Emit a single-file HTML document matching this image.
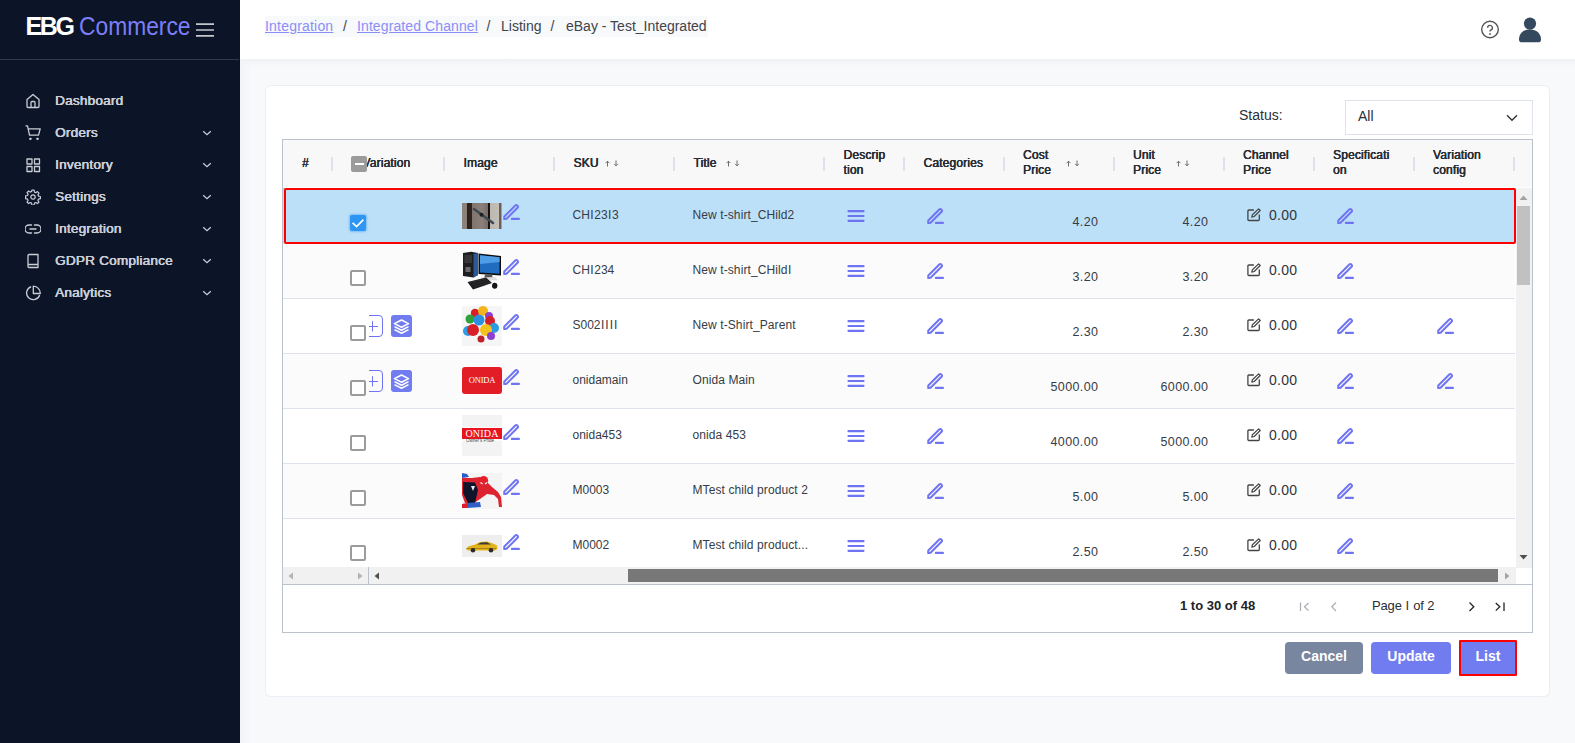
<!DOCTYPE html><html><head><meta charset="utf-8"><style>
*{box-sizing:border-box;margin:0;padding:0}
html,body{width:1575px;height:743px;overflow:hidden;background:#f8f9fb;font-family:"Liberation Sans",sans-serif;position:relative}
.a{position:absolute}
.t{line-height:1;white-space:nowrap}
</style></head><body>
<div class="a" style="left:0;top:0;width:240px;height:743px;background:#0c1427"></div>
<div class="a" style="left:0;top:59px;width:239px;height:1px;background:#2f3a4f"></div>
<div class="a t" style="left:25.5px;top:14.04px;font-size:25px;font-weight:bold;color:#ffffff;letter-spacing:-2.4px">EBG</div>
<div class="a t" style="left:78.5px;top:14.04px;font-size:25px;font-weight:normal;color:#7b7ff7;transform:scaleX(0.912);transform-origin:0 0">Commerce</div>
<svg class="a" style="left:196px;top:23px" width="18" height="14" viewBox="0 0 18 14"><path d="M0 1.2H18M0 7H18M0 12.8H18" stroke="#c3c6cd" stroke-width="1.7"/></svg>
<div class="a t" style="left:55px;top:93.57px;font-size:13.5px;font-weight:normal;color:#c9cdd6;text-shadow:0.45px 0 0 #c9cdd6,-0.1px 0 0 #c9cdd6;letter-spacing:0.25px">Dashboard</div>
<svg class="a" style="left:25px;top:93px" width="16" height="16" viewBox="0 0 16 16"><path d="M2 6.5L8 1.5 14 6.5V13.5A1 1 0 0 1 13 14.5H3A1 1 0 0 1 2 13.5Z M6 14.5V9.5A1 1 0 0 1 7 8.5H9A1 1 0 0 1 10 9.5V14.5" fill="none" stroke="#c9cdd6" stroke-width="1.3" stroke-linejoin="round"/></svg>
<div class="a t" style="left:55px;top:125.57px;font-size:13.5px;font-weight:normal;color:#c9cdd6;text-shadow:0.45px 0 0 #c9cdd6,-0.1px 0 0 #c9cdd6;letter-spacing:0.25px">Orders</div>
<svg class="a" style="left:25px;top:125px" width="16" height="16" viewBox="0 0 16 16"><path d="M0.5 0.8H2.5L4.5 10.2H13.5L15.2 3.8H3.3" fill="none" stroke="#c9cdd6" stroke-width="1.3" stroke-linejoin="round"/><rect x="4.3" y="12.7" width="2.2" height="2.2" rx="0.6" fill="#c9cdd6"/><rect x="11.4" y="12.7" width="2.2" height="2.2" rx="0.6" fill="#c9cdd6"/></svg>
<svg class="a" style="left:202px;top:130px" width="10" height="6" viewBox="0 0 10 6"><path d="M1.2 1.2L5 4.7 8.8 1.2" fill="none" stroke="#c9cdd6" stroke-width="1.3"/></svg>
<div class="a t" style="left:55px;top:157.57px;font-size:13.5px;font-weight:normal;color:#c9cdd6;text-shadow:0.45px 0 0 #c9cdd6,-0.1px 0 0 #c9cdd6;letter-spacing:0.25px">Inventory</div>
<svg class="a" style="left:25px;top:157px" width="16" height="16" viewBox="0 0 16 16"><path d="M2 2H7V7H2Z M9.5 2H14.5V7H9.5Z M2 9.5H7V14.5H2Z M9.5 9.5H14.5V14.5H9.5Z" fill="none" stroke="#c9cdd6" stroke-width="1.3" stroke-linejoin="round"/></svg>
<svg class="a" style="left:202px;top:162px" width="10" height="6" viewBox="0 0 10 6"><path d="M1.2 1.2L5 4.7 8.8 1.2" fill="none" stroke="#c9cdd6" stroke-width="1.3"/></svg>
<div class="a t" style="left:55px;top:189.57px;font-size:13.5px;font-weight:normal;color:#c9cdd6;text-shadow:0.45px 0 0 #c9cdd6,-0.1px 0 0 #c9cdd6;letter-spacing:0.25px">Settings</div>
<svg class="a" style="left:25px;top:189px" width="16" height="16" viewBox="0 0 16 16"><path d="M6.9 1.2h2.2l.4 1.9 1.3.6 1.6-1.1 1.6 1.6-1.1 1.6.6 1.3 1.9.4v2.2l-1.9.4-.6 1.3 1.1 1.6-1.6 1.6-1.6-1.1-1.3.6-.4 1.9H6.9l-.4-1.9-1.3-.6-1.6 1.1-1.6-1.6 1.1-1.6-.6-1.3-1.9-.4V6.9l1.9-.4.6-1.3-1.1-1.6 1.6-1.6 1.6 1.1 1.3-.6Z" fill="none" stroke="#c9cdd6" stroke-width="1.2" stroke-linejoin="round"/><circle cx="8" cy="8" r="2.2" fill="none" stroke="#c9cdd6" stroke-width="1.2"/></svg>
<svg class="a" style="left:202px;top:194px" width="10" height="6" viewBox="0 0 10 6"><path d="M1.2 1.2L5 4.7 8.8 1.2" fill="none" stroke="#c9cdd6" stroke-width="1.3"/></svg>
<div class="a t" style="left:55px;top:221.57px;font-size:13.5px;font-weight:normal;color:#c9cdd6;text-shadow:0.45px 0 0 #c9cdd6,-0.1px 0 0 #c9cdd6;letter-spacing:0.25px">Integration</div>
<svg class="a" style="left:25px;top:221px" width="16" height="16" viewBox="0 0 16 16"><path d="M6.5 4H4A4 4 0 0 0 4 12H6.5 M9.5 4H12A4 4 0 0 1 12 12H9.5 M5 8H11" fill="none" stroke="#c9cdd6" stroke-width="1.4" stroke-linecap="round"/></svg>
<svg class="a" style="left:202px;top:226px" width="10" height="6" viewBox="0 0 10 6"><path d="M1.2 1.2L5 4.7 8.8 1.2" fill="none" stroke="#c9cdd6" stroke-width="1.3"/></svg>
<div class="a t" style="left:55px;top:253.57px;font-size:13.5px;font-weight:normal;color:#c9cdd6;text-shadow:0.45px 0 0 #c9cdd6,-0.1px 0 0 #c9cdd6;letter-spacing:0.25px">GDPR Compliance</div>
<svg class="a" style="left:25px;top:253px" width="16" height="16" viewBox="0 0 16 16"><path d="M3 2.5A1 1 0 0 1 4 1.5H13V14.5H4A1 1 0 0 1 3 13.5Z M3 11.5H13" fill="none" stroke="#c9cdd6" stroke-width="1.3" stroke-linejoin="round"/></svg>
<svg class="a" style="left:202px;top:258px" width="10" height="6" viewBox="0 0 10 6"><path d="M1.2 1.2L5 4.7 8.8 1.2" fill="none" stroke="#c9cdd6" stroke-width="1.3"/></svg>
<div class="a t" style="left:55px;top:285.57px;font-size:13.5px;font-weight:normal;color:#c9cdd6;text-shadow:0.45px 0 0 #c9cdd6,-0.1px 0 0 #c9cdd6;letter-spacing:0.25px">Analytics</div>
<svg class="a" style="left:25px;top:285px" width="16" height="16" viewBox="0 0 16 16"><path d="M6.2 1.6A6.7 6.7 0 1 0 14.7 10" fill="none" stroke="#c9cdd6" stroke-width="1.3"/><path d="M8.3 1.1V8.5H15.3A7.2 7.2 0 0 0 8.3 1.1Z" fill="none" stroke="#c9cdd6" stroke-width="1.3" stroke-linejoin="round"/></svg>
<svg class="a" style="left:202px;top:290px" width="10" height="6" viewBox="0 0 10 6"><path d="M1.2 1.2L5 4.7 8.8 1.2" fill="none" stroke="#c9cdd6" stroke-width="1.3"/></svg>
<div class="a" style="left:240px;top:0;width:1335px;height:59px;background:#fff"></div>
<div class="a" style="left:240px;top:59px;width:1335px;height:7px;background:linear-gradient(#eef0f3,rgba(248,249,251,0))"></div>
<div class="a" style="left:240px;top:59px;width:12px;height:684px;background:linear-gradient(90deg,#f2f3f6,rgba(248,249,251,0))"></div>
<div class="a" style="left:265px;top:16px;width:443px;height:21px;background:#f8f9fb"></div>
<div class="a t" style="left:265px;top:18.55px;font-size:14px;font-weight:normal;color:#8a8ef8;letter-spacing:0.2px"><u>Integration</u></div>
<div class="a t" style="left:343px;top:18.55px;font-size:14px;font-weight:normal;color:#3f434a;">/</div>
<div class="a t" style="left:357px;top:18.55px;font-size:14px;font-weight:normal;color:#8a8ef8;letter-spacing:0.1px"><u>Integrated Channel</u></div>
<div class="a t" style="left:486.5px;top:18.55px;font-size:14px;font-weight:normal;color:#3f434a;">/</div>
<div class="a t" style="left:501px;top:18.55px;font-size:14px;font-weight:normal;color:#3f434a;">Listing</div>
<div class="a t" style="left:550.5px;top:18.55px;font-size:14px;font-weight:normal;color:#3f434a;">/</div>
<div class="a t" style="left:566px;top:18.55px;font-size:14px;font-weight:normal;color:#3f434a;">eBay - Test_Integrated</div>
<svg class="a" style="left:1480px;top:20px" width="20" height="20" viewBox="0 0 20 20"><circle cx="10" cy="9.5" r="8.3" fill="none" stroke="#555" stroke-width="1.4"/><path d="M7.6 7.8A2.4 2.4 0 1 1 10.6 10.1C10 10.4 10 10.9 10 11.5" fill="none" stroke="#555" stroke-width="1.4"/><circle cx="10" cy="14" r="0.9" fill="#555"/></svg>
<svg class="a" style="left:1518px;top:16px" width="24" height="28" viewBox="0 0 24 28"><circle cx="12" cy="7.6" r="6.1" fill="#34495e"/><path d="M1 23.5C1 17.5 5.5 13.5 12 13.5S23 17.5 23 23.5C23 25.5 22 26.3 20 26.3H4C2 26.3 1 25.5 1 23.5Z" fill="#34495e"/></svg>
<div class="a" style="left:266px;top:86px;width:1283px;height:610px;background:#fff;border-radius:5px;box-shadow:0 0 0 1px #eceef5"></div>
<div class="a t" style="left:1239px;top:107.55px;font-size:14px;font-weight:normal;color:#2b2f36;">Status:</div>
<div class="a" style="left:1345px;top:100px;width:188px;height:35px;border:1px solid #dfe3ea;background:#fff"></div>
<div class="a t" style="left:1358px;top:109.15px;font-size:14px;font-weight:normal;color:#2b2f36;">All</div>
<svg class="a" style="left:1506px;top:114px" width="12" height="8" viewBox="0 0 12 8"><path d="M1 1.2L6 6.2 11 1.2" fill="none" stroke="#333" stroke-width="1.4"/></svg>
<div class="a" style="left:282px;top:139px;width:1251px;height:494px;border:1px solid #bcc2cb;background:#fff"></div>
<div class="a" style="left:283px;top:140px;width:1249px;height:47px;background:#f8f8f8"></div>
<div class="a" style="left:283px;top:187px;width:1249px;height:1px;background:#fcfdfd"></div>
<div class="a" style="left:283px;top:188px;width:1249px;height:1px;background:#bcc2cb"></div>
<div class="a" style="left:331px;top:157px;width:2px;height:14px;background:#dfe2ec"></div>
<div class="a" style="left:443px;top:157px;width:2px;height:14px;background:#dfe2ec"></div>
<div class="a" style="left:553px;top:157px;width:2px;height:14px;background:#dfe2ec"></div>
<div class="a" style="left:673px;top:157px;width:2px;height:14px;background:#dfe2ec"></div>
<div class="a" style="left:823px;top:157px;width:2px;height:14px;background:#dfe2ec"></div>
<div class="a" style="left:903px;top:157px;width:2px;height:14px;background:#dfe2ec"></div>
<div class="a" style="left:1003px;top:157px;width:2px;height:14px;background:#dfe2ec"></div>
<div class="a" style="left:1113px;top:157px;width:2px;height:14px;background:#dfe2ec"></div>
<div class="a" style="left:1223px;top:157px;width:2px;height:14px;background:#dfe2ec"></div>
<div class="a" style="left:1313px;top:157px;width:2px;height:14px;background:#dfe2ec"></div>
<div class="a" style="left:1413px;top:157px;width:2px;height:14px;background:#dfe2ec"></div>
<div class="a" style="left:1513px;top:157px;width:2px;height:14px;background:#dfe2ec"></div>
<div class="a t" style="left:302px;top:156.94px;font-size:12px;font-weight:normal;color:#2a2e35;text-shadow:0.35px 0 0 #2a2e35,-0.1px 0 0 #2a2e35;letter-spacing:0.15px">#</div>
<div class="a t" style="left:362.5px;top:156.94px;font-size:12px;font-weight:normal;color:#2a2e35;text-shadow:0.35px 0 0 #2a2e35,-0.1px 0 0 #2a2e35;letter-spacing:0.15px">Variation</div>
<div class="a" style="left:351px;top:156px;width:16px;height:16px;background:#9b9b9b;border-radius:2px"></div>
<div class="a" style="left:354.5px;top:163px;width:9px;height:1.6px;background:#fff"></div>
<div class="a t" style="left:463.5px;top:156.94px;font-size:12px;font-weight:normal;color:#2a2e35;text-shadow:0.35px 0 0 #2a2e35,-0.1px 0 0 #2a2e35;letter-spacing:0.15px">Image</div>
<div class="a t" style="left:573.5px;top:156.94px;font-size:12px;font-weight:normal;color:#2a2e35;text-shadow:0.35px 0 0 #2a2e35,-0.1px 0 0 #2a2e35;letter-spacing:0.15px">SKU</div>
<div class="a t" style="left:693.5px;top:156.94px;font-size:12px;font-weight:normal;color:#2a2e35;text-shadow:0.35px 0 0 #2a2e35,-0.1px 0 0 #2a2e35;letter-spacing:0.15px">Title</div>
<div class="a t" style="left:843.5px;top:148.64px;font-size:12px;font-weight:normal;color:#2a2e35;text-shadow:0.35px 0 0 #2a2e35,-0.1px 0 0 #2a2e35;letter-spacing:0.15px">Descrip</div>
<div class="a t" style="left:843.5px;top:164.24px;font-size:12px;font-weight:normal;color:#2a2e35;text-shadow:0.35px 0 0 #2a2e35,-0.1px 0 0 #2a2e35;letter-spacing:0.15px">tion</div>
<div class="a t" style="left:923.5px;top:156.94px;font-size:12px;font-weight:normal;color:#2a2e35;text-shadow:0.35px 0 0 #2a2e35,-0.1px 0 0 #2a2e35;letter-spacing:0.15px">Categories</div>
<div class="a t" style="left:1023px;top:148.64px;font-size:12px;font-weight:normal;color:#2a2e35;text-shadow:0.35px 0 0 #2a2e35,-0.1px 0 0 #2a2e35;letter-spacing:0.15px">Cost</div>
<div class="a t" style="left:1023px;top:164.24px;font-size:12px;font-weight:normal;color:#2a2e35;text-shadow:0.35px 0 0 #2a2e35,-0.1px 0 0 #2a2e35;letter-spacing:0.15px">Price</div>
<div class="a t" style="left:1133px;top:148.64px;font-size:12px;font-weight:normal;color:#2a2e35;text-shadow:0.35px 0 0 #2a2e35,-0.1px 0 0 #2a2e35;letter-spacing:0.15px">Unit</div>
<div class="a t" style="left:1133px;top:164.24px;font-size:12px;font-weight:normal;color:#2a2e35;text-shadow:0.35px 0 0 #2a2e35,-0.1px 0 0 #2a2e35;letter-spacing:0.15px">Price</div>
<div class="a t" style="left:1243px;top:148.64px;font-size:12px;font-weight:normal;color:#2a2e35;text-shadow:0.35px 0 0 #2a2e35,-0.1px 0 0 #2a2e35;letter-spacing:0.15px">Channel</div>
<div class="a t" style="left:1243px;top:164.24px;font-size:12px;font-weight:normal;color:#2a2e35;text-shadow:0.35px 0 0 #2a2e35,-0.1px 0 0 #2a2e35;letter-spacing:0.15px">Price</div>
<div class="a t" style="left:1333px;top:148.64px;font-size:12px;font-weight:normal;color:#2a2e35;text-shadow:0.35px 0 0 #2a2e35,-0.1px 0 0 #2a2e35;letter-spacing:0.15px">Specificati</div>
<div class="a t" style="left:1333px;top:164.24px;font-size:12px;font-weight:normal;color:#2a2e35;text-shadow:0.35px 0 0 #2a2e35,-0.1px 0 0 #2a2e35;letter-spacing:0.15px">on</div>
<div class="a t" style="left:1433px;top:148.64px;font-size:12px;font-weight:normal;color:#2a2e35;text-shadow:0.35px 0 0 #2a2e35,-0.1px 0 0 #2a2e35;letter-spacing:0.15px">Variation</div>
<div class="a t" style="left:1433px;top:164.24px;font-size:12px;font-weight:normal;color:#2a2e35;text-shadow:0.35px 0 0 #2a2e35,-0.1px 0 0 #2a2e35;letter-spacing:0.15px">config</div>
<svg class="a" style="left:604px;top:160px" width="16" height="7" viewBox="0 0 16 7"><path d="M3.5 6.5V1.2M1.6 3.1L3.5 1.2 5.4 3.1 M12 0.5V5.8M10.1 3.9L12 5.8 13.9 3.9" fill="none" stroke="#606060" stroke-width="0.9"/></svg>
<svg class="a" style="left:725px;top:160px" width="16" height="7" viewBox="0 0 16 7"><path d="M3.5 6.5V1.2M1.6 3.1L3.5 1.2 5.4 3.1 M12 0.5V5.8M10.1 3.9L12 5.8 13.9 3.9" fill="none" stroke="#606060" stroke-width="0.9"/></svg>
<svg class="a" style="left:1064.5px;top:160px" width="16" height="7" viewBox="0 0 16 7"><path d="M3.5 6.5V1.2M1.6 3.1L3.5 1.2 5.4 3.1 M12 0.5V5.8M10.1 3.9L12 5.8 13.9 3.9" fill="none" stroke="#606060" stroke-width="0.9"/></svg>
<svg class="a" style="left:1174.5px;top:160px" width="16" height="7" viewBox="0 0 16 7"><path d="M3.5 6.5V1.2M1.6 3.1L3.5 1.2 5.4 3.1 M12 0.5V5.8M10.1 3.9L12 5.8 13.9 3.9" fill="none" stroke="#606060" stroke-width="0.9"/></svg>
<div class="a" style="left:283px;top:189px;width:1232px;height:54px;background:#bde0f9"></div>
<div class="a" style="left:350px;top:215px;width:16px;height:16px;border-radius:2px;background:#2d95f2;box-shadow:0 0 2px 1px rgba(45,149,242,.45)"></div><svg class="a" style="left:350px;top:215px" width="16" height="16" viewBox="0 0 16 16"><path d="M2.6 7.8L6.6 11.6 13.4 4.6" fill="none" stroke="#fff" stroke-width="1.7"/></svg>
<div class="a" style="left:462px;top:203px;width:40px;height:26px;background:linear-gradient(90deg,#8f837d 0,#8a7f79 12%,#2b201b 13%,#30241e 24%,#7f746e 25%,#8a8079 50%,#7a6e66 64%,#151010 65%,#1a1412 70%,#bdb7b2 71%,#c4beb9 92%,#6b5f58 93%,#6b5f58 97%,#a49c96 98%)"></div><svg class="a" style="left:462px;top:203px" width="40" height="26"><path d="M12 6L31 20" stroke="#3d4b52" stroke-width="2.6" stroke-linecap="round"/><circle cx="19.5" cy="11.8" r="2" fill="#1b2226"/></svg>
<svg class="a" style="left:503px;top:203.8px" width="17" height="16" viewBox="0 0 17 16"><path d="M1.27 12.57 L12.27 1.57 A1.6 1.6 0 0 1 14.53 3.83 L3.53 14.83 L1.2 15.1 Z" fill="none" stroke="#6f74f2" stroke-width="2" stroke-linejoin="round"/><path d="M8.9 14.9 H15.9" stroke="#6f74f2" stroke-width="2.2" stroke-linecap="round"/></svg>
<div class="a t" style="left:572.5px;top:208.84px;font-size:12px;font-weight:normal;color:#363c46;">CH<span style="letter-spacing:0.7px;padding-left:0.35px">I</span>23<span style="letter-spacing:0.7px;padding-left:0.35px">I</span>3</div>
<div class="a t" style="left:692.5px;top:208.84px;font-size:12px;font-weight:normal;color:#363c46;letter-spacing:0.1px">New t-shirt_CHild2</div>
<svg class="a" style="left:846.5px;top:210px" width="18" height="12" viewBox="0 0 18 12"><path d="M1.5 1.2H16.5M1.5 6H16.5M1.5 10.8H16.5" stroke="#6f74f2" stroke-width="2.2" stroke-linecap="round"/></svg>
<svg class="a" style="left:927px;top:207.5px" width="17" height="16" viewBox="0 0 17 16"><path d="M1.27 12.57 L12.27 1.57 A1.6 1.6 0 0 1 14.53 3.83 L3.53 14.83 L1.2 15.1 Z" fill="none" stroke="#6f74f2" stroke-width="2" stroke-linejoin="round"/><path d="M8.9 14.9 H15.9" stroke="#6f74f2" stroke-width="2.2" stroke-linecap="round"/></svg>
<div class="a t" style="right:476.5999999999999px;top:216.42px;font-size:12.5px;font-weight:normal;color:#363c46;letter-spacing:0.4px">4.20</div>
<div class="a t" style="right:366.5999999999999px;top:216.42px;font-size:12.5px;font-weight:normal;color:#363c46;letter-spacing:0.4px">4.20</div>
<svg class="a" style="left:1247px;top:207.5px" width="14" height="14" viewBox="0 0 14 14"><path d="M6.9 2H1.9A1 1 0 0 0 0.9 3V11.5A1 1 0 0 0 1.9 12.5H11.3A1 1 0 0 0 12.3 11.5V6.5" fill="none" stroke="#444" stroke-width="1.3"/><path d="M11.6 0.9L13.2 2.5 7.2 8.5 4.8 9.1 5.4 6.7Z" fill="none" stroke="#444" stroke-width="1.2" stroke-linejoin="round"/></svg>
<div class="a t" style="left:1269px;top:208.15px;font-size:14px;font-weight:normal;color:#2f343b;letter-spacing:0.3px">0.00</div>
<svg class="a" style="left:1337px;top:207.5px" width="17" height="16" viewBox="0 0 17 16"><path d="M1.27 12.57 L12.27 1.57 A1.6 1.6 0 0 1 14.53 3.83 L3.53 14.83 L1.2 15.1 Z" fill="none" stroke="#6f74f2" stroke-width="2" stroke-linejoin="round"/><path d="M8.9 14.9 H15.9" stroke="#6f74f2" stroke-width="2.2" stroke-linecap="round"/></svg>
<div class="a" style="left:283px;top:243px;width:1232px;height:55px;background:#fbfbfb"></div>
<div class="a" style="left:283px;top:243px;width:1232px;height:1px;background:#dde2eb"></div>
<div class="a" style="left:350px;top:270px;width:16px;height:16px;border:2px solid #9b9b9b;border-radius:2px;background:#fff"></div>
<svg class="a" style="left:462px;top:251px" width="40" height="40" viewBox="0 0 40 40"><path d="M1 2L9 0.8 16 2V24L11.5 26.5 1 25Z" fill="#1e1e20"/><path d="M11.5 3L16 2V24L11.5 26.5Z" fill="#2a5a9a"/><path d="M2.5 5H10M2.5 7H10M2.5 9H10M2.5 11H10" stroke="#5a5a5e" stroke-width="0.8"/><rect x="3.5" y="16" width="5" height="5" fill="#6a6a6e"/><path d="M16.5 2.5L39 5V24.5L16.5 23Z" fill="#0e0e10"/><path d="M18 4.2L37.5 6.3V22.8L18 21.5Z" fill="#1f6cc0"/><path d="M18 4.2L37.5 6.3V11L18 13Z" fill="#4f9de6"/><path d="M23 23.5H30L31 28H22Z" fill="#555"/><path d="M19 26.5L33 26 36 29 22 30Z" fill="#dddddd"/><path d="M5.5 31L24 26.5 30 32 11 38.5Z" fill="#1c1c1e"/><path d="M8 31.5L24 27.8M10 33.5L26 29.5M12 35.5L28 31.3" stroke="#3d3d40" stroke-width="0.6"/><ellipse cx="32.7" cy="34.7" rx="2.7" ry="3" fill="#151515"/></svg>
<svg class="a" style="left:503px;top:258.8px" width="17" height="16" viewBox="0 0 17 16"><path d="M1.27 12.57 L12.27 1.57 A1.6 1.6 0 0 1 14.53 3.83 L3.53 14.83 L1.2 15.1 Z" fill="none" stroke="#6f74f2" stroke-width="2" stroke-linejoin="round"/><path d="M8.9 14.9 H15.9" stroke="#6f74f2" stroke-width="2.2" stroke-linecap="round"/></svg>
<div class="a t" style="left:572.5px;top:263.84px;font-size:12px;font-weight:normal;color:#363c46;">CH<span style="letter-spacing:0.7px;padding-left:0.35px">I</span>234</div>
<div class="a t" style="left:692.5px;top:263.84px;font-size:12px;font-weight:normal;color:#363c46;letter-spacing:0.1px">New t-shirt_CHild<span style="letter-spacing:0.7px;padding-left:0.35px">I</span></div>
<svg class="a" style="left:846.5px;top:265px" width="18" height="12" viewBox="0 0 18 12"><path d="M1.5 1.2H16.5M1.5 6H16.5M1.5 10.8H16.5" stroke="#6f74f2" stroke-width="2.2" stroke-linecap="round"/></svg>
<svg class="a" style="left:927px;top:262.5px" width="17" height="16" viewBox="0 0 17 16"><path d="M1.27 12.57 L12.27 1.57 A1.6 1.6 0 0 1 14.53 3.83 L3.53 14.83 L1.2 15.1 Z" fill="none" stroke="#6f74f2" stroke-width="2" stroke-linejoin="round"/><path d="M8.9 14.9 H15.9" stroke="#6f74f2" stroke-width="2.2" stroke-linecap="round"/></svg>
<div class="a t" style="right:476.5999999999999px;top:271.42px;font-size:12.5px;font-weight:normal;color:#363c46;letter-spacing:0.4px">3.20</div>
<div class="a t" style="right:366.5999999999999px;top:271.42px;font-size:12.5px;font-weight:normal;color:#363c46;letter-spacing:0.4px">3.20</div>
<svg class="a" style="left:1247px;top:262.5px" width="14" height="14" viewBox="0 0 14 14"><path d="M6.9 2H1.9A1 1 0 0 0 0.9 3V11.5A1 1 0 0 0 1.9 12.5H11.3A1 1 0 0 0 12.3 11.5V6.5" fill="none" stroke="#444" stroke-width="1.3"/><path d="M11.6 0.9L13.2 2.5 7.2 8.5 4.8 9.1 5.4 6.7Z" fill="none" stroke="#444" stroke-width="1.2" stroke-linejoin="round"/></svg>
<div class="a t" style="left:1269px;top:263.15px;font-size:14px;font-weight:normal;color:#2f343b;letter-spacing:0.3px">0.00</div>
<svg class="a" style="left:1337px;top:262.5px" width="17" height="16" viewBox="0 0 17 16"><path d="M1.27 12.57 L12.27 1.57 A1.6 1.6 0 0 1 14.53 3.83 L3.53 14.83 L1.2 15.1 Z" fill="none" stroke="#6f74f2" stroke-width="2" stroke-linejoin="round"/><path d="M8.9 14.9 H15.9" stroke="#6f74f2" stroke-width="2.2" stroke-linecap="round"/></svg>
<div class="a" style="left:283px;top:298px;width:1232px;height:55px;background:#ffffff"></div>
<div class="a" style="left:283px;top:298px;width:1232px;height:1px;background:#dde2eb"></div>
<div class="a" style="left:350px;top:325px;width:16px;height:16px;border:2px solid #9b9b9b;border-radius:2px;background:#fff"></div>
<svg class="a" style="left:369px;top:315px" width="15" height="23" viewBox="0 0 15 23"><path d="M0 0.5H10A3.5 3.5 0 0 1 13.5 4V18A3.5 3.5 0 0 1 10 21.5H0" fill="none" stroke="#6f74f2" stroke-width="1"/><path d="M0 11.5H9M3.5 6.2V16.5" stroke="#6f74f2" stroke-width="1"/></svg>
<div class="a" style="left:391px;top:315px;width:21px;height:22px;background:#717cf0;border-radius:3px"></div>
<svg class="a" style="left:391px;top:315px" width="21" height="22" viewBox="0 0 21 22"><path d="M10.5 5L17.5 8.6 10.5 12.2 3.5 8.6Z" fill="none" stroke="#fff" stroke-width="1.6" stroke-linejoin="round"/><path d="M3.5 11.6L10.5 15.2 17.5 11.6M3.5 14.6L10.5 18.2 17.5 14.6" fill="none" stroke="#fff" stroke-width="1.6" stroke-linejoin="round"/></svg>
<div class="a" style="left:462px;top:306px;width:40px;height:40px;background:#f5f5f5"></div><svg class="a" style="left:462px;top:306px" width="40" height="40" viewBox="0 0 40 40"><circle cx="13" cy="7" r="4.2" fill="#d81f26"/><circle cx="21" cy="5" r="5" fill="#f2b51d"/><circle cx="27" cy="10" r="4" fill="#8e3fcf"/><circle cx="8" cy="13" r="4.5" fill="#2fa13a"/><circle cx="17" cy="14" r="5.5" fill="#2c8fe0"/><circle cx="28" cy="15" r="5" fill="#d62028"/><circle cx="32" cy="22" r="5" fill="#2c9be0"/><circle cx="6" cy="25" r="5" fill="#2c9be0"/><circle cx="11" cy="24" r="6" fill="#d81f26"/><circle cx="24" cy="24" r="6" fill="#f5c21b"/><circle cx="19" cy="33" r="3.5" fill="#c0202a"/><circle cx="29" cy="30" r="4" fill="#8e3fcf"/></svg>
<svg class="a" style="left:503px;top:313.8px" width="17" height="16" viewBox="0 0 17 16"><path d="M1.27 12.57 L12.27 1.57 A1.6 1.6 0 0 1 14.53 3.83 L3.53 14.83 L1.2 15.1 Z" fill="none" stroke="#6f74f2" stroke-width="2" stroke-linejoin="round"/><path d="M8.9 14.9 H15.9" stroke="#6f74f2" stroke-width="2.2" stroke-linecap="round"/></svg>
<div class="a t" style="left:572.5px;top:318.84px;font-size:12px;font-weight:normal;color:#363c46;">S002<span style="letter-spacing:0.7px;padding-left:0.35px">I</span><span style="letter-spacing:0.7px;padding-left:0.35px">I</span><span style="letter-spacing:0.7px;padding-left:0.35px">I</span><span style="letter-spacing:0.7px;padding-left:0.35px">I</span></div>
<div class="a t" style="left:692.5px;top:318.84px;font-size:12px;font-weight:normal;color:#363c46;letter-spacing:0.1px">New t-Shirt_Parent</div>
<svg class="a" style="left:846.5px;top:320px" width="18" height="12" viewBox="0 0 18 12"><path d="M1.5 1.2H16.5M1.5 6H16.5M1.5 10.8H16.5" stroke="#6f74f2" stroke-width="2.2" stroke-linecap="round"/></svg>
<svg class="a" style="left:927px;top:317.5px" width="17" height="16" viewBox="0 0 17 16"><path d="M1.27 12.57 L12.27 1.57 A1.6 1.6 0 0 1 14.53 3.83 L3.53 14.83 L1.2 15.1 Z" fill="none" stroke="#6f74f2" stroke-width="2" stroke-linejoin="round"/><path d="M8.9 14.9 H15.9" stroke="#6f74f2" stroke-width="2.2" stroke-linecap="round"/></svg>
<div class="a t" style="right:476.5999999999999px;top:326.42px;font-size:12.5px;font-weight:normal;color:#363c46;letter-spacing:0.4px">2.30</div>
<div class="a t" style="right:366.5999999999999px;top:326.42px;font-size:12.5px;font-weight:normal;color:#363c46;letter-spacing:0.4px">2.30</div>
<svg class="a" style="left:1247px;top:317.5px" width="14" height="14" viewBox="0 0 14 14"><path d="M6.9 2H1.9A1 1 0 0 0 0.9 3V11.5A1 1 0 0 0 1.9 12.5H11.3A1 1 0 0 0 12.3 11.5V6.5" fill="none" stroke="#444" stroke-width="1.3"/><path d="M11.6 0.9L13.2 2.5 7.2 8.5 4.8 9.1 5.4 6.7Z" fill="none" stroke="#444" stroke-width="1.2" stroke-linejoin="round"/></svg>
<div class="a t" style="left:1269px;top:318.15px;font-size:14px;font-weight:normal;color:#2f343b;letter-spacing:0.3px">0.00</div>
<svg class="a" style="left:1337px;top:317.5px" width="17" height="16" viewBox="0 0 17 16"><path d="M1.27 12.57 L12.27 1.57 A1.6 1.6 0 0 1 14.53 3.83 L3.53 14.83 L1.2 15.1 Z" fill="none" stroke="#6f74f2" stroke-width="2" stroke-linejoin="round"/><path d="M8.9 14.9 H15.9" stroke="#6f74f2" stroke-width="2.2" stroke-linecap="round"/></svg>
<svg class="a" style="left:1437px;top:317.5px" width="17" height="16" viewBox="0 0 17 16"><path d="M1.27 12.57 L12.27 1.57 A1.6 1.6 0 0 1 14.53 3.83 L3.53 14.83 L1.2 15.1 Z" fill="none" stroke="#6f74f2" stroke-width="2" stroke-linejoin="round"/><path d="M8.9 14.9 H15.9" stroke="#6f74f2" stroke-width="2.2" stroke-linecap="round"/></svg>
<div class="a" style="left:283px;top:353px;width:1232px;height:55px;background:#fbfbfb"></div>
<div class="a" style="left:283px;top:353px;width:1232px;height:1px;background:#dde2eb"></div>
<div class="a" style="left:350px;top:380px;width:16px;height:16px;border:2px solid #9b9b9b;border-radius:2px;background:#fff"></div>
<svg class="a" style="left:369px;top:370px" width="15" height="23" viewBox="0 0 15 23"><path d="M0 0.5H10A3.5 3.5 0 0 1 13.5 4V18A3.5 3.5 0 0 1 10 21.5H0" fill="none" stroke="#6f74f2" stroke-width="1"/><path d="M0 11.5H9M3.5 6.2V16.5" stroke="#6f74f2" stroke-width="1"/></svg>
<div class="a" style="left:391px;top:370px;width:21px;height:22px;background:#717cf0;border-radius:3px"></div>
<svg class="a" style="left:391px;top:370px" width="21" height="22" viewBox="0 0 21 22"><path d="M10.5 5L17.5 8.6 10.5 12.2 3.5 8.6Z" fill="none" stroke="#fff" stroke-width="1.6" stroke-linejoin="round"/><path d="M3.5 11.6L10.5 15.2 17.5 11.6M3.5 14.6L10.5 18.2 17.5 14.6" fill="none" stroke="#fff" stroke-width="1.6" stroke-linejoin="round"/></svg>
<div class="a" style="left:462px;top:367px;width:40px;height:27px;background:#e31d25;border-radius:3px"></div><div class="a t" style="left:462px;top:376px;width:40px;text-align:center;font-family:'Liberation Serif',serif;font-size:8.5px;color:#fff;letter-spacing:-0.2px">ONIDA</div>
<svg class="a" style="left:503px;top:368.8px" width="17" height="16" viewBox="0 0 17 16"><path d="M1.27 12.57 L12.27 1.57 A1.6 1.6 0 0 1 14.53 3.83 L3.53 14.83 L1.2 15.1 Z" fill="none" stroke="#6f74f2" stroke-width="2" stroke-linejoin="round"/><path d="M8.9 14.9 H15.9" stroke="#6f74f2" stroke-width="2.2" stroke-linecap="round"/></svg>
<div class="a t" style="left:572.5px;top:373.84px;font-size:12px;font-weight:normal;color:#363c46;">onidamain</div>
<div class="a t" style="left:692.5px;top:373.84px;font-size:12px;font-weight:normal;color:#363c46;letter-spacing:0.1px">Onida Main</div>
<svg class="a" style="left:846.5px;top:375px" width="18" height="12" viewBox="0 0 18 12"><path d="M1.5 1.2H16.5M1.5 6H16.5M1.5 10.8H16.5" stroke="#6f74f2" stroke-width="2.2" stroke-linecap="round"/></svg>
<svg class="a" style="left:927px;top:372.5px" width="17" height="16" viewBox="0 0 17 16"><path d="M1.27 12.57 L12.27 1.57 A1.6 1.6 0 0 1 14.53 3.83 L3.53 14.83 L1.2 15.1 Z" fill="none" stroke="#6f74f2" stroke-width="2" stroke-linejoin="round"/><path d="M8.9 14.9 H15.9" stroke="#6f74f2" stroke-width="2.2" stroke-linecap="round"/></svg>
<div class="a t" style="right:476.5999999999999px;top:381.42px;font-size:12.5px;font-weight:normal;color:#363c46;letter-spacing:0.4px">5000.00</div>
<div class="a t" style="right:366.5999999999999px;top:381.42px;font-size:12.5px;font-weight:normal;color:#363c46;letter-spacing:0.4px">6000.00</div>
<svg class="a" style="left:1247px;top:372.5px" width="14" height="14" viewBox="0 0 14 14"><path d="M6.9 2H1.9A1 1 0 0 0 0.9 3V11.5A1 1 0 0 0 1.9 12.5H11.3A1 1 0 0 0 12.3 11.5V6.5" fill="none" stroke="#444" stroke-width="1.3"/><path d="M11.6 0.9L13.2 2.5 7.2 8.5 4.8 9.1 5.4 6.7Z" fill="none" stroke="#444" stroke-width="1.2" stroke-linejoin="round"/></svg>
<div class="a t" style="left:1269px;top:373.15px;font-size:14px;font-weight:normal;color:#2f343b;letter-spacing:0.3px">0.00</div>
<svg class="a" style="left:1337px;top:372.5px" width="17" height="16" viewBox="0 0 17 16"><path d="M1.27 12.57 L12.27 1.57 A1.6 1.6 0 0 1 14.53 3.83 L3.53 14.83 L1.2 15.1 Z" fill="none" stroke="#6f74f2" stroke-width="2" stroke-linejoin="round"/><path d="M8.9 14.9 H15.9" stroke="#6f74f2" stroke-width="2.2" stroke-linecap="round"/></svg>
<svg class="a" style="left:1437px;top:372.5px" width="17" height="16" viewBox="0 0 17 16"><path d="M1.27 12.57 L12.27 1.57 A1.6 1.6 0 0 1 14.53 3.83 L3.53 14.83 L1.2 15.1 Z" fill="none" stroke="#6f74f2" stroke-width="2" stroke-linejoin="round"/><path d="M8.9 14.9 H15.9" stroke="#6f74f2" stroke-width="2.2" stroke-linecap="round"/></svg>
<div class="a" style="left:283px;top:408px;width:1232px;height:55px;background:#ffffff"></div>
<div class="a" style="left:283px;top:408px;width:1232px;height:1px;background:#dde2eb"></div>
<div class="a" style="left:350px;top:435px;width:16px;height:16px;border:2px solid #9b9b9b;border-radius:2px;background:#fff"></div>
<div class="a" style="left:462px;top:415px;width:40px;height:41px;background:#f3f3f3"></div><div class="a" style="left:462px;top:427px;width:40px;height:14px;background:#fcfcfc"></div><div class="a" style="left:462px;top:428px;width:40px;height:11px;background:#e8141e"></div><div class="a t" style="left:462px;top:429.3px;width:40px;text-align:center;font-family:'Liberation Serif',serif;font-size:10px;color:#fff;letter-spacing:0.2px">ONIDA</div><div class="a t" style="left:466px;top:439px;font-size:4.5px;color:#444">Owner's Pride</div>
<svg class="a" style="left:503px;top:423.8px" width="17" height="16" viewBox="0 0 17 16"><path d="M1.27 12.57 L12.27 1.57 A1.6 1.6 0 0 1 14.53 3.83 L3.53 14.83 L1.2 15.1 Z" fill="none" stroke="#6f74f2" stroke-width="2" stroke-linejoin="round"/><path d="M8.9 14.9 H15.9" stroke="#6f74f2" stroke-width="2.2" stroke-linecap="round"/></svg>
<div class="a t" style="left:572.5px;top:428.84px;font-size:12px;font-weight:normal;color:#363c46;">onida453</div>
<div class="a t" style="left:692.5px;top:428.84px;font-size:12px;font-weight:normal;color:#363c46;letter-spacing:0.1px">onida 453</div>
<svg class="a" style="left:846.5px;top:430px" width="18" height="12" viewBox="0 0 18 12"><path d="M1.5 1.2H16.5M1.5 6H16.5M1.5 10.8H16.5" stroke="#6f74f2" stroke-width="2.2" stroke-linecap="round"/></svg>
<svg class="a" style="left:927px;top:427.5px" width="17" height="16" viewBox="0 0 17 16"><path d="M1.27 12.57 L12.27 1.57 A1.6 1.6 0 0 1 14.53 3.83 L3.53 14.83 L1.2 15.1 Z" fill="none" stroke="#6f74f2" stroke-width="2" stroke-linejoin="round"/><path d="M8.9 14.9 H15.9" stroke="#6f74f2" stroke-width="2.2" stroke-linecap="round"/></svg>
<div class="a t" style="right:476.5999999999999px;top:436.42px;font-size:12.5px;font-weight:normal;color:#363c46;letter-spacing:0.4px">4000.00</div>
<div class="a t" style="right:366.5999999999999px;top:436.42px;font-size:12.5px;font-weight:normal;color:#363c46;letter-spacing:0.4px">5000.00</div>
<svg class="a" style="left:1247px;top:427.5px" width="14" height="14" viewBox="0 0 14 14"><path d="M6.9 2H1.9A1 1 0 0 0 0.9 3V11.5A1 1 0 0 0 1.9 12.5H11.3A1 1 0 0 0 12.3 11.5V6.5" fill="none" stroke="#444" stroke-width="1.3"/><path d="M11.6 0.9L13.2 2.5 7.2 8.5 4.8 9.1 5.4 6.7Z" fill="none" stroke="#444" stroke-width="1.2" stroke-linejoin="round"/></svg>
<div class="a t" style="left:1269px;top:428.15px;font-size:14px;font-weight:normal;color:#2f343b;letter-spacing:0.3px">0.00</div>
<svg class="a" style="left:1337px;top:427.5px" width="17" height="16" viewBox="0 0 17 16"><path d="M1.27 12.57 L12.27 1.57 A1.6 1.6 0 0 1 14.53 3.83 L3.53 14.83 L1.2 15.1 Z" fill="none" stroke="#6f74f2" stroke-width="2" stroke-linejoin="round"/><path d="M8.9 14.9 H15.9" stroke="#6f74f2" stroke-width="2.2" stroke-linecap="round"/></svg>
<div class="a" style="left:283px;top:463px;width:1232px;height:55px;background:#fbfbfb"></div>
<div class="a" style="left:283px;top:463px;width:1232px;height:1px;background:#dde2eb"></div>
<div class="a" style="left:350px;top:490px;width:16px;height:16px;border:2px solid #9b9b9b;border-radius:2px;background:#fff"></div>
<div class="a" style="left:462px;top:472.5px;width:40px;height:36px;background:#f4f4f4"></div><svg class="a" style="left:462px;top:472.5px" width="40" height="36" viewBox="0 0 40 36"><path d="M0 5L10 5 18 4 24 8 30 14 36 19 39 24 40 34 37 34 36 26 32 22 25 21 18 26 12 30 3 30 0 22Z" fill="#dd2230"/><circle cx="21.7" cy="7.3" r="4.4" fill="#e3202c"/><path d="M18.5 9.5L20.5 11M25 9.5L23 11" stroke="#f2f2f2" stroke-width="1.3"/><path d="M1 9L13 9.5 16 17 13 30 6 30 1 20Z" fill="#10142a"/><path d="M9 13H13L11 18Z" fill="#e8ecf5"/><path d="M0 0L5 1 7 4 0 5Z" fill="#2d5cc4"/><path d="M5 30L18 29 19 34 5 35Z" fill="#2f60c8"/><path d="M0 31L5 30 5 35 0 35Z" fill="#d9202a"/></svg>
<svg class="a" style="left:503px;top:478.8px" width="17" height="16" viewBox="0 0 17 16"><path d="M1.27 12.57 L12.27 1.57 A1.6 1.6 0 0 1 14.53 3.83 L3.53 14.83 L1.2 15.1 Z" fill="none" stroke="#6f74f2" stroke-width="2" stroke-linejoin="round"/><path d="M8.9 14.9 H15.9" stroke="#6f74f2" stroke-width="2.2" stroke-linecap="round"/></svg>
<div class="a t" style="left:572.5px;top:483.84px;font-size:12px;font-weight:normal;color:#363c46;">M0003</div>
<div class="a t" style="left:692.5px;top:483.84px;font-size:12px;font-weight:normal;color:#363c46;letter-spacing:0.1px">MTest child product 2</div>
<svg class="a" style="left:846.5px;top:485px" width="18" height="12" viewBox="0 0 18 12"><path d="M1.5 1.2H16.5M1.5 6H16.5M1.5 10.8H16.5" stroke="#6f74f2" stroke-width="2.2" stroke-linecap="round"/></svg>
<svg class="a" style="left:927px;top:482.5px" width="17" height="16" viewBox="0 0 17 16"><path d="M1.27 12.57 L12.27 1.57 A1.6 1.6 0 0 1 14.53 3.83 L3.53 14.83 L1.2 15.1 Z" fill="none" stroke="#6f74f2" stroke-width="2" stroke-linejoin="round"/><path d="M8.9 14.9 H15.9" stroke="#6f74f2" stroke-width="2.2" stroke-linecap="round"/></svg>
<div class="a t" style="right:476.5999999999999px;top:491.42px;font-size:12.5px;font-weight:normal;color:#363c46;letter-spacing:0.4px">5.00</div>
<div class="a t" style="right:366.5999999999999px;top:491.42px;font-size:12.5px;font-weight:normal;color:#363c46;letter-spacing:0.4px">5.00</div>
<svg class="a" style="left:1247px;top:482.5px" width="14" height="14" viewBox="0 0 14 14"><path d="M6.9 2H1.9A1 1 0 0 0 0.9 3V11.5A1 1 0 0 0 1.9 12.5H11.3A1 1 0 0 0 12.3 11.5V6.5" fill="none" stroke="#444" stroke-width="1.3"/><path d="M11.6 0.9L13.2 2.5 7.2 8.5 4.8 9.1 5.4 6.7Z" fill="none" stroke="#444" stroke-width="1.2" stroke-linejoin="round"/></svg>
<div class="a t" style="left:1269px;top:483.15px;font-size:14px;font-weight:normal;color:#2f343b;letter-spacing:0.3px">0.00</div>
<svg class="a" style="left:1337px;top:482.5px" width="17" height="16" viewBox="0 0 17 16"><path d="M1.27 12.57 L12.27 1.57 A1.6 1.6 0 0 1 14.53 3.83 L3.53 14.83 L1.2 15.1 Z" fill="none" stroke="#6f74f2" stroke-width="2" stroke-linejoin="round"/><path d="M8.9 14.9 H15.9" stroke="#6f74f2" stroke-width="2.2" stroke-linecap="round"/></svg>
<div class="a" style="left:283px;top:518px;width:1232px;height:50px;background:#ffffff"></div>
<div class="a" style="left:283px;top:518px;width:1232px;height:1px;background:#dde2eb"></div>
<div class="a" style="left:350px;top:545px;width:16px;height:16px;border:2px solid #9b9b9b;border-radius:2px;background:#fff"></div>
<div class="a" style="left:462px;top:535px;width:40px;height:22px;background:#eeeeee"></div><svg class="a" style="left:462px;top:535px" width="40" height="22" viewBox="0 0 40 22"><path d="M4 14L6 11.5 13 9.5 18 7 25 6.5 31 8.5 35 10.5 35.5 14 33 15.5 6 15.5Z" fill="#e2b21e"/><path d="M15 9.5L19 7.5 25 7.2 29 9.5Z" fill="#3a3a3a"/><path d="M4.5 13.5H34" stroke="#9c7a12" stroke-width="0.8"/><circle cx="11" cy="15.2" r="2.3" fill="#2b2b2b"/><circle cx="29" cy="15.2" r="2.3" fill="#2b2b2b"/></svg>
<svg class="a" style="left:503px;top:533.8px" width="17" height="16" viewBox="0 0 17 16"><path d="M1.27 12.57 L12.27 1.57 A1.6 1.6 0 0 1 14.53 3.83 L3.53 14.83 L1.2 15.1 Z" fill="none" stroke="#6f74f2" stroke-width="2" stroke-linejoin="round"/><path d="M8.9 14.9 H15.9" stroke="#6f74f2" stroke-width="2.2" stroke-linecap="round"/></svg>
<div class="a t" style="left:572.5px;top:538.84px;font-size:12px;font-weight:normal;color:#363c46;">M0002</div>
<div class="a t" style="left:692.5px;top:538.84px;font-size:12px;font-weight:normal;color:#363c46;letter-spacing:0.1px">MTest child product...</div>
<svg class="a" style="left:846.5px;top:540px" width="18" height="12" viewBox="0 0 18 12"><path d="M1.5 1.2H16.5M1.5 6H16.5M1.5 10.8H16.5" stroke="#6f74f2" stroke-width="2.2" stroke-linecap="round"/></svg>
<svg class="a" style="left:927px;top:537.5px" width="17" height="16" viewBox="0 0 17 16"><path d="M1.27 12.57 L12.27 1.57 A1.6 1.6 0 0 1 14.53 3.83 L3.53 14.83 L1.2 15.1 Z" fill="none" stroke="#6f74f2" stroke-width="2" stroke-linejoin="round"/><path d="M8.9 14.9 H15.9" stroke="#6f74f2" stroke-width="2.2" stroke-linecap="round"/></svg>
<div class="a t" style="right:476.5999999999999px;top:546.42px;font-size:12.5px;font-weight:normal;color:#363c46;letter-spacing:0.4px">2.50</div>
<div class="a t" style="right:366.5999999999999px;top:546.42px;font-size:12.5px;font-weight:normal;color:#363c46;letter-spacing:0.4px">2.50</div>
<svg class="a" style="left:1247px;top:537.5px" width="14" height="14" viewBox="0 0 14 14"><path d="M6.9 2H1.9A1 1 0 0 0 0.9 3V11.5A1 1 0 0 0 1.9 12.5H11.3A1 1 0 0 0 12.3 11.5V6.5" fill="none" stroke="#444" stroke-width="1.3"/><path d="M11.6 0.9L13.2 2.5 7.2 8.5 4.8 9.1 5.4 6.7Z" fill="none" stroke="#444" stroke-width="1.2" stroke-linejoin="round"/></svg>
<div class="a t" style="left:1269px;top:538.15px;font-size:14px;font-weight:normal;color:#2f343b;letter-spacing:0.3px">0.00</div>
<svg class="a" style="left:1337px;top:537.5px" width="17" height="16" viewBox="0 0 17 16"><path d="M1.27 12.57 L12.27 1.57 A1.6 1.6 0 0 1 14.53 3.83 L3.53 14.83 L1.2 15.1 Z" fill="none" stroke="#6f74f2" stroke-width="2" stroke-linejoin="round"/><path d="M8.9 14.9 H15.9" stroke="#6f74f2" stroke-width="2.2" stroke-linecap="round"/></svg>
<div class="a" style="left:284px;top:188px;width:1232px;height:56px;border:2px solid #fd0000;border-radius:2px"></div>
<div class="a" style="left:1516px;top:188px;width:16px;height:380px;background:#f1f1f1"></div>
<div class="a" style="left:1517px;top:206px;width:13px;height:79px;background:#c1c1c1"></div>
<svg class="a" style="left:1518px;top:194px" width="11" height="7"><path d="M1.5 6H9.5L5.5 1.5Z" fill="#a3a3a3"/></svg>
<svg class="a" style="left:1518px;top:554px" width="11" height="7"><path d="M1.5 1H9.5L5.5 5.5Z" fill="#505050"/></svg>
<div class="a" style="left:283px;top:567px;width:1233px;height:17px;background:#f1f1f1"></div>
<div class="a" style="left:368px;top:567px;width:1px;height:17px;background:#bcc2cb"></div>
<div class="a" style="left:283px;top:584px;width:1249px;height:1px;background:#bcc2cb"></div>
<svg class="a" style="left:287px;top:571px" width="8" height="10"><path d="M6 1.5V8.5L1.5 5Z" fill="#b3b3b3"/></svg>
<svg class="a" style="left:356px;top:571px" width="8" height="10"><path d="M2 1.5V8.5L6.5 5Z" fill="#b3b3b3"/></svg>
<svg class="a" style="left:373px;top:571px" width="8" height="10"><path d="M6 1.5V8.5L1.5 5Z" fill="#505050"/></svg>
<div class="a" style="left:628px;top:569px;width:870px;height:13px;background:#787878"></div>
<svg class="a" style="left:1503px;top:571px" width="8" height="10"><path d="M2 1.5V8.5L6.5 5Z" fill="#a3a3a3"/></svg>
<div class="a t" style="left:1180px;top:599.30px;font-size:13px;font-weight:bold;color:#202328;">1 to 30 of 48</div>
<svg class="a" style="left:1299px;top:601px" width="12" height="11" viewBox="0 0 12 11"><path d="M1.5 1.5V10 M9.5 2L5.5 5.8 9.5 9.6" fill="none" stroke="#a8abb0" stroke-width="1.2"/></svg>
<svg class="a" style="left:1329px;top:601px" width="10" height="11" viewBox="0 0 10 11"><path d="M7 1.5L2.8 5.8 7 10" fill="none" stroke="#a8abb0" stroke-width="1.2"/></svg>
<div class="a t" style="left:1372px;top:599.30px;font-size:13px;font-weight:normal;color:#2a2e35;letter-spacing:-0.15px">Page <span style="letter-spacing:0.6px;padding-left:0.3px">I</span> of 2</div>
<svg class="a" style="left:1467px;top:601px" width="10" height="11" viewBox="0 0 10 11"><path d="M2.5 1.5L6.8 5.8 2.5 10" fill="none" stroke="#222" stroke-width="1.3"/></svg>
<svg class="a" style="left:1494px;top:601px" width="12" height="11" viewBox="0 0 12 11"><path d="M1.8 2L5.8 5.8 1.8 9.6 M10 1.5V10" fill="none" stroke="#222" stroke-width="1.3"/></svg>
<div class="a" style="left:1285px;top:642px;width:78px;height:32px;border-radius:4px;background:#7886a0"></div>
<div class="a" style="left:1371px;top:642px;width:80px;height:32px;border-radius:4px;background:#717cf0"></div>
<div class="a" style="left:1459px;top:640px;width:58px;height:36px;border:2px solid #fd0000;background:#717cf0;border-radius:1px"></div>
<div class="a t" style="left:1285px;top:649.45px;font-size:14px;font-weight:bold;color:#fff;width:78px;text-align:center">Cancel</div>
<div class="a t" style="left:1371px;top:649.45px;font-size:14px;font-weight:bold;color:#fff;width:80px;text-align:center">Update</div>
<div class="a t" style="left:1459px;top:649.45px;font-size:14px;font-weight:bold;color:#fff;width:58px;text-align:center">List</div>
</body></html>
